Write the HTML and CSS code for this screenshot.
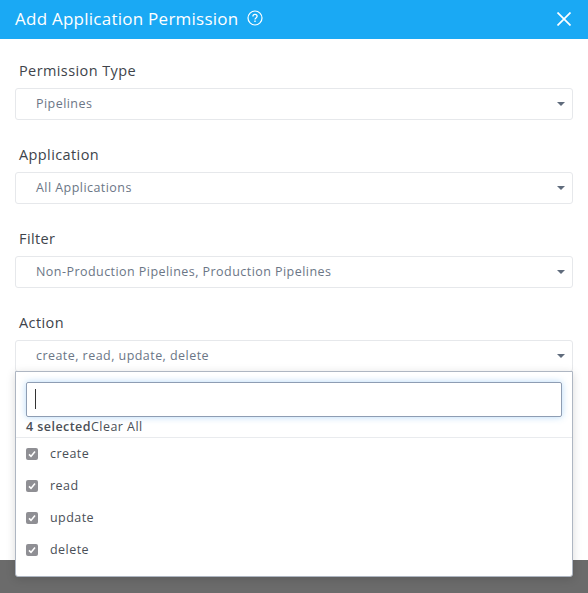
FILE: index.html
```html
<!DOCTYPE html>
<html lang="en">
<head>
  <meta charset="UTF-8" />
  <title>Add Application Permission</title>
  <link rel="stylesheet" href="styles.css">
</head>
<body>
<div class="modal">
  <header class="modal-header">
    <h1>Add Application Permission</h1>
    <svg class="help-icon" width="16" height="16" viewBox="0 0 16 16" fill="none" stroke="#fff">
      <circle cx="8" cy="8" r="7" stroke-width="1.2"/>
      <path d="M5.9 6.4c0-1.3 1-2 2.1-2s2.1.7 2.1 1.9c0 1.6-2.1 1.6-2.1 3.1" stroke-width="1.3"/>
      <path d="M8 10.6v1.3" stroke-width="1.4"/>
    </svg>
    <svg class="close-icon" width="14" height="14" viewBox="0 0 14 14" stroke="#fff" stroke-width="1.7">
      <path d="M0.5 0.5L13.5 13.5M13.5 0.5L0.5 13.5"/>
    </svg>
  </header>

  <div class="modal-body">
    <div class="field">
      <label>Permission Type</label>
      <div class="select"><span>Pipelines</span><i class="caret"></i></div>
    </div>
    <div class="field">
      <label>Application</label>
      <div class="select"><span>All Applications</span><i class="caret"></i></div>
    </div>
    <div class="field">
      <label>Filter</label>
      <div class="select"><span>Non-Production Pipelines, Production Pipelines</span><i class="caret"></i></div>
    </div>
    <div class="field field-open">
      <label>Action</label>
      <div class="select"><span>create, read, update, delete</span><i class="caret"></i></div>

      <div class="dropdown">
        <div class="search"><div class="cursor"></div></div>
        <div class="summary"><b>4 selected</b><span>Clear All</span></div>
        <ul class="options">
          <li><span class="check"><svg width="8" height="8" viewBox="0 0 8 8" fill="none" stroke="#fff" stroke-width="1.6"><path d="M1 4.4L3 6.4L7 1.4"/></svg></span>create</li>
          <li><span class="check"><svg width="8" height="8" viewBox="0 0 8 8" fill="none" stroke="#fff" stroke-width="1.6"><path d="M1 4.4L3 6.4L7 1.4"/></svg></span>read</li>
          <li><span class="check"><svg width="8" height="8" viewBox="0 0 8 8" fill="none" stroke="#fff" stroke-width="1.6"><path d="M1 4.4L3 6.4L7 1.4"/></svg></span>update</li>
          <li><span class="check"><svg width="8" height="8" viewBox="0 0 8 8" fill="none" stroke="#fff" stroke-width="1.6"><path d="M1 4.4L3 6.4L7 1.4"/></svg></span>delete</li>
        </ul>
      </div>
    </div>
  </div>
</div>
</body>
</html>
```

FILE: styles.css
```css
html, body {
  margin: 0;
  height: 100%;
}

body {
  font-family: "Open Sans", sans-serif;
  background: linear-gradient(#4f4f4f, #6b6b6b 10px);
  height: 593px;
  overflow: hidden;
  color: #4a4f57;
}

.modal {
  background-color: white;
  height: 560px;
}

.modal-header {
  background-color: #1aa9f4;
  height: 39px;
  padding: 0 17px 0 15px;
  display: flex;
  align-items: center;
  color: white;
}

.modal-header h1 {
  margin: 0 0 3px;
  font-size: 17px;
  font-weight: 400;
  letter-spacing: 0.25px;
}

.help-icon {
  margin-left: 8px;
  margin-top: -3px;
}

.close-icon {
  margin-left: auto;
  margin-top: -2px;
}

.modal-body {
  padding: 22px 15px 0;
}

.field {
  margin-bottom: 25px;
}

.field-open {
  position: relative;
}

.field label {
  display: block;
  font-size: 14.5px;
  line-height: 20px;
  letter-spacing: 0.4px;
  margin: 0 0 7px 4px;
  color: #40444b;
}

.select {
  box-sizing: border-box;
  height: 32px;
  border: 1px solid #e6e8eb;
  border-radius: 3px;
  padding-left: 20px;
  padding-bottom: 1px;
  display: flex;
  align-items: center;
  justify-content: space-between;
  font-size: 12.5px;
  letter-spacing: 0.45px;
  color: #6b7686;
}

.caret {
  width: 0;
  height: 0;
  border-left: 4px solid transparent;
  border-right: 4px solid transparent;
  border-top: 4px solid #5f6b7c;
  margin-right: 7px;
}

.dropdown {
  position: absolute;
  top: 58px;
  left: 0;
  right: 0;
  height: 206px;
  box-sizing: border-box;
  background-color: white;
  border: 1px solid #aeb6c2;
  border-radius: 0 0 3px 3px;
  box-shadow: 0 2px 10px rgba(0, 0, 0, 0.15);
  padding: 10px 10px 0;
}

.search {
  box-sizing: border-box;
  height: 35px;
  border: 1px solid #8e9db3;
  border-radius: 2px;
  box-shadow: 0 0 7px rgba(90, 170, 240, 0.45);
  padding: 6px 8px;
}

.cursor {
  width: 1px;
  height: 20px;
  background-color: #333;
}

.summary {
  font-size: 12.5px;
  line-height: 20px;
  letter-spacing: 0.45px;
  margin: 0 -10px;
  padding: 0 10px;
  border-bottom: 1px solid #e9ebee;
  color: #4a4f57;
}

.summary b {
  font-weight: 600;
}

.options {
  list-style: none;
  margin: -1px 0 0;
  padding: 0;
}

.options li {
  height: 32px;
  display: flex;
  align-items: center;
  font-size: 12.5px;
  letter-spacing: 0.45px;
}

.check {
  width: 12px;
  height: 12px;
  margin: 2px 12px 0 0;
  border-radius: 2px;
  background-color: #8f8f94;
  display: flex;
  align-items: center;
  justify-content: center;
}
```
